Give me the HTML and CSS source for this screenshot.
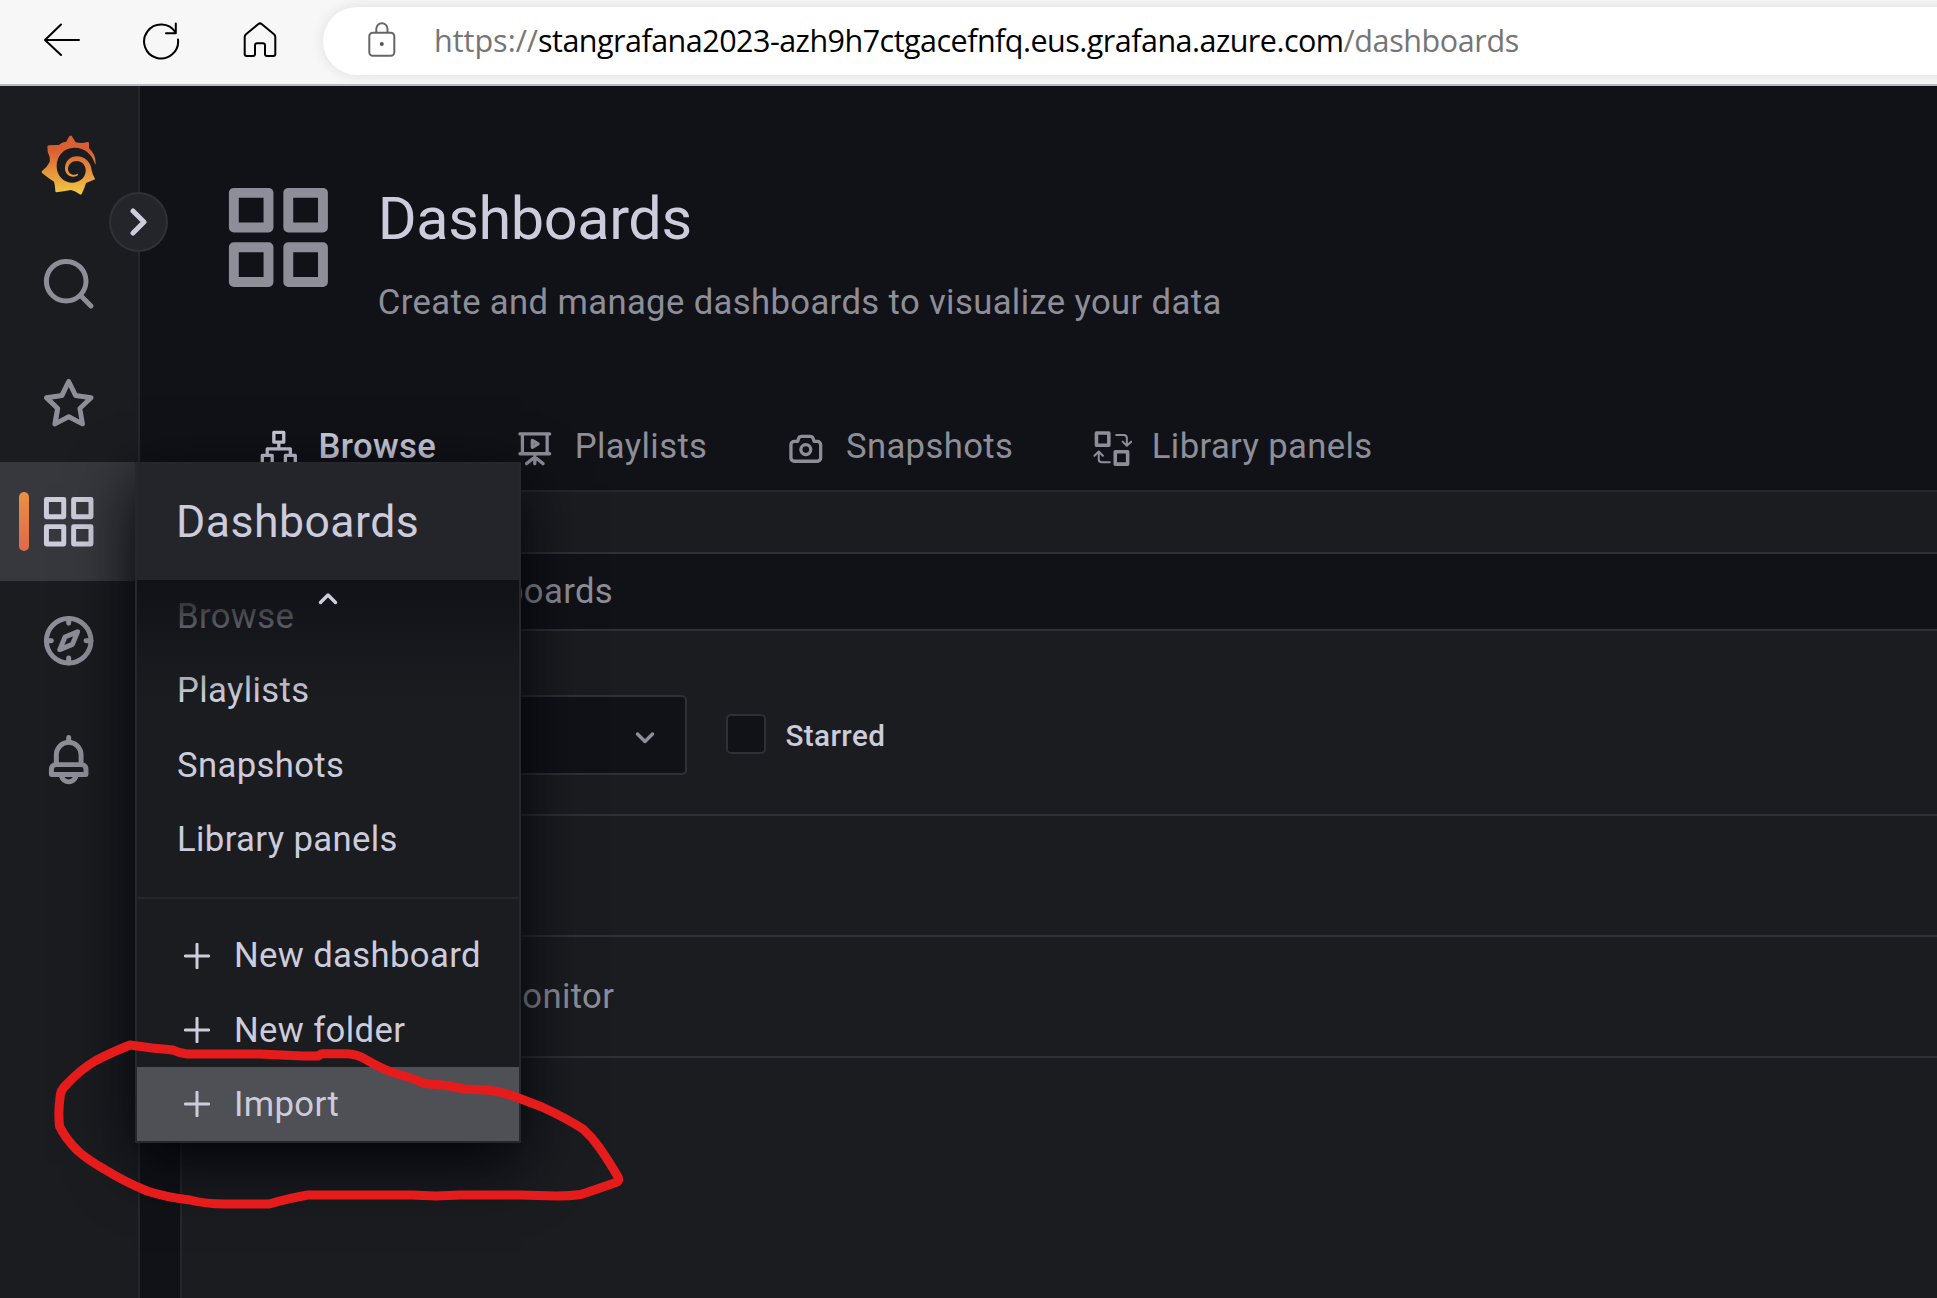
FILE: index.html
```html
<!DOCTYPE html>
<html lang="en">
<head>
<meta charset="utf-8">
<title>Dashboards - Grafana</title>
<link rel="stylesheet" href="styles.css">
</head>
<body>
<svg class="defs" width="0" height="0">
  <symbol id="apps" viewBox="0 0 24 24"><path d="M10,13H3a1,1,0,0,0-1,1v7a1,1,0,0,0,1,1h7a1,1,0,0,0,1-1V14A1,1,0,0,0,10,13ZM9,20H4V15H9ZM21,2H14a1,1,0,0,0-1,1v7a1,1,0,0,0,1,1h7a1,1,0,0,0,1-1V3A1,1,0,0,0,21,2ZM20,9H15V4h5Zm1,4H14a1,1,0,0,0-1,1v7a1,1,0,0,0,1,1h7a1,1,0,0,0,1-1V14A1,1,0,0,0,21,13Zm-1,7H15V15h5ZM10,2H3A1,1,0,0,0,2,3v7a1,1,0,0,0,1,1h7a1,1,0,0,0,1-1V3A1,1,0,0,0,10,2ZM9,9H4V4H9Z"/></symbol>
  <symbol id="plus" viewBox="0 0 26 26"><path d="M13 1.2V24.8M1.2 13H24.8" fill="none" stroke="currentColor" stroke-width="3" stroke-linecap="round"/></symbol>
</svg>

<header class="browser">
  <svg class="b-back" width="38" height="36" viewBox="0 0 38 36"><path d="M36 18H2M18 2.5L2 18L18 33" /></svg>
  <svg class="b-reload" width="38" height="38" viewBox="0 0 38 38"><path d="M36 17.5A17 17 0 1 1 33.6 10.6M33.8 1.5V11.2H24"/></svg>
  <svg class="b-home" width="34" height="36" viewBox="0 0 34 36"><path d="M15.4 2Q17 .7 18.6 2L31 12.2Q32.3 13.3 32.3 15V32Q32.3 34 30.3 34H24Q22 34 22 32V23.2Q22 21.2 20 21.2H14Q12 21.2 12 23.2V32Q12 34 10 34H3.7Q1.7 34 1.7 32V15Q1.7 13.3 3 12.2Z"/></svg>
  <div class="address">
    <svg class="lock" width="28" height="36" viewBox="0 0 28 36"><rect x="1.3" y="10.8" width="25" height="23" rx="3.5"/><path d="M8.3 10V6.8A5.6 5.6 0 0 1 19.5 6.8V10"/><circle class="dot" cx="13.8" cy="22" r="2"/></svg>
    <div class="url"><span class="scheme">https://</span><span class="host">stangrafana2023-azh9h7ctgacefnfq.eus.grafana.azure.com</span><span class="path">/dashboards</span></div>
  </div>
</header>

<div class="app">
  <nav class="rail">
    <a class="rail-logo">
      <svg width="58" height="64" viewBox="120 400 174 192">
        <defs><linearGradient id="sun" x1="0" y1="0" x2="0" y2="1"><stop offset=".25" stop-color="#da5f33"/><stop offset="1" stop-color="#f2ca44"/></linearGradient></defs>
        <path fill="url(#sun)" d="M211 408Q214 407 217 412L227 428Q246 433 262 427Q267 426 267 431L267 446Q287 463 287 492Q286 497 284 490C276 464 254 444 224 444C190 444 169 470 170 501C171 530 193 550 219 549C243 548 259 530 257 509C255 492 242 484 230 484C216 484 205 494 204 507C204 518 212 525 222 525C227 525 230 523 232 522Q236 523 233 527C229 531 223 532 217 531C203 529 194 518 195 504C196 484 211 470 231 470C254 470 273 487 275 512Q277 525 285 537Q286 540 280 541L258 550Q254 565 245 583Q242 586 238 583Q226 574 213 571Q190 575 170 578Q166 578 166 574Q166 560 162 546Q146 536 126 520Q124 517 126 514Q142 502 149 487Q150 480 149 472Q141 458 142 441Q143 438 147 437Q164 436 176 436Q188 426 199 426Q203 418 208 410Z"/>
      </svg>
    </a>
    <a class="rail-item"><svg viewBox="0 0 24 24"><path d="M21.71,20.29,18,16.61A9,9,0,1,0,16.61,18l3.68,3.68a1,1,0,0,0,1.42,0A1,1,0,0,0,21.71,20.29ZM11,18a7,7,0,1,1,7-7A7,7,0,0,1,11,18Z"/></svg></a>
    <a class="rail-item"><svg viewBox="0 0 24 24"><path d="M22,9.67A1,1,0,0,0,21.14,9l-5.69-.83L12.9,3a1,1,0,0,0-1.8,0L8.55,8.16,2.86,9a1,1,0,0,0-.81.68,1,1,0,0,0,.25,1l4.13,4-1,5.68A1,1,0,0,0,6.9,21.44L12,18.77l5.1,2.67a.93.93,0,0,0,.46.12,1,1,0,0,0,.59-.19,1,1,0,0,0,.4-1l-1-5.68,4.13-4A1,1,0,0,0,22,9.67Zm-6.15,4a1,1,0,0,0-.29.88l.72,4.2-3.76-2a1.06,1.06,0,0,0-.94,0l-3.76,2,.72-4.2a1,1,0,0,0-.29-.88l-3-3,4.21-.61a1,1,0,0,0,.76-.55L12,5.7l1.88,3.82a1,1,0,0,0,.76.55l4.21.61Z"/></svg></a>
    <a class="rail-item active"><svg><use href="#apps"/></svg></a>
    <a class="rail-item"><svg class="line" viewBox="0 0 24 24"><circle cx="12" cy="12" r="9"/><path d="M12 3V5M12 19V21M3 12H5M19 12H21M15.6 8.4L10.5 10.5L8.4 15.6L13.5 13.5Z"/></svg></a>
    <a class="rail-item"><svg viewBox="0 0 24 24"><path d="M18,13.18V10a6,6,0,0,0-5-5.91V3a1,1,0,0,0-2,0V4.09A6,6,0,0,0,6,10v3.18A3,3,0,0,0,4,16v2a1,1,0,0,0,1,1H8.14a4,4,0,0,0,7.72,0H19a1,1,0,0,0,1-1V16A3,3,0,0,0,18,13.18ZM8,10a4,4,0,0,1,8,0v3H8Zm4,10a2,2,0,0,1-1.72-1h3.44A2,2,0,0,1,12,20Zm6-3H6V16a1,1,0,0,1,1-1H17a1,1,0,0,1,1,1Z"/></svg></a>
  </nav>

  <main class="page">
    <div class="page-head">
      <svg class="page-icon"><use href="#apps"/></svg>
      <div>
        <h1>Dashboards</h1>
        <p class="sub">Create and manage dashboards to visualize your data</p>
      </div>
    </div>
    <div class="tabs">
      <a class="tab on"><svg class="line" viewBox="0 0 24 24"><path d="M9 2H15V8H9ZM12 8V12M5 16V12H19V16M2 16H8V22H2ZM16 16H22V22H16Z"/></svg><span>Browse</span></a>
      <a class="tab"><svg class="line" viewBox="0 0 24 24"><path d="M3 3H21M4.5 3V15M19.5 3V15M3 15H21M12 15V21M12 17L7 21M12 17L17 21M10.5 6.9V11.1L14 9Z"/></svg><span>Playlists</span></a>
      <a class="tab"><svg viewBox="0 0 24 24"><path d="M19,6.5H17.72l-.32-1a3,3,0,0,0-2.84-2H9.44A3,3,0,0,0,6.6,5.55l-.32,1H5a3,3,0,0,0-3,3v8a3,3,0,0,0,3,3H19a3,3,0,0,0,3-3v-8A3,3,0,0,0,19,6.5Zm1,11a1,1,0,0,1-1,1H5a1,1,0,0,1-1-1v-8a1,1,0,0,1,1-1H7a1,1,0,0,0,1-.68l.54-1.64a1,1,0,0,1,.95-.68h5.12a1,1,0,0,1,.95.68l.54,1.64A1,1,0,0,0,17,8.5h2a1,1,0,0,1,1,1Zm-8-9a4,4,0,1,0,4,4A4,4,0,0,0,12,8.5Zm0,6a2,2,0,1,1,2-2A2,2,0,0,1,12,14.5Z"/></svg><span>Snapshots</span></a>
      <a class="tab"><svg class="lib" viewBox="0 0 40 40"><rect x="4.5" y="4" width="12.5" height="12.5"/><rect x="23.5" y="23" width="12.5" height="12.5"/><path d="M24.5 6H32Q35.2 6 35.2 9V16.5M31 12.8L35.2 17L39.5 12.8M18 33.5H10Q6.8 33.5 6.8 30.5V23M2.500 27L6.8 22.8L11 27"/></svg><span>Library panels</span></a>
    </div>
    <section class="panel">
      <div class="search">Search for dashboards</div>
      <div class="filters">
        <div class="select"><svg width="20" height="14" viewBox="0 0 20 14"><path d="M2.5 3L10 10.5L17.5 3"/></svg></div>
        <label class="check"><i></i>Starred</label>
      </div>
      <div class="row"></div>
      <div class="row">Azure Monitor</div>
    </section>
  </main>

  <div class="flyout">
    <div class="fly-head">Dashboards</div>
    <div class="fly-body">
      <a>Browse</a><a>Playlists</a><a>Snapshots</a><a>Library panels</a>
      <div class="fade"><svg width="22" height="16" viewBox="0 0 22 16"><path d="M3.5 11.5L11 4L18.5 11.5"/></svg></div>
    </div>
    <div class="fly-actions">
      <a><svg><use href="#plus"/></svg>New dashboard</a>
      <a><svg><use href="#plus"/></svg>New folder</a>
      <a class="hover"><svg><use href="#plus"/></svg>Import</a>
    </div>
  </div>

  <button class="expand"><svg width="18" height="28" viewBox="0 0 18 28"><path d="M3 3L14 14L3 25"/></svg></button>
</div>

<svg class="marker" viewBox="0 0 1937 1298"><path d="M130 1045L152 1048L173 1050Q180 1053.5 187 1054L260 1054L303 1056H318L322 1053.7H347Q357 1054 365 1059Q380 1068 394 1073Q410 1077 425 1083.5L447 1085.5L464 1089L486 1090Q500 1091 516 1097L542 1107Q566 1118 583 1129Q592 1137 599 1147Q612 1166 618 1177Q620 1181 616 1182.5L581 1194.5Q570 1196 557 1196L520 1195H460L436 1196L412 1195H308Q290 1198 269 1204H226Q205 1204 190 1200Q165 1197 147 1191Q125 1182 104 1169Q88 1160 78 1151Q65 1138 59.5 1126Q58 1112 60 1098Q60 1090 67 1084Q80 1070 95 1061Q110 1053 130 1045Z"/></svg>
</body>
</html>
```
FILE: styles.css
```css
* { box-sizing: border-box; }
body {
  margin: 0;
  width: 1937px;
  height: 1298px;
  overflow: hidden;
  display: flex;
  flex-direction: column;
  position: relative;
  font-family: Roboto, "Liberation Sans", sans-serif;
  font-size: 34.65px;
  letter-spacing: 0.37px;
  background: #111217;
  color: #ccccdc;
}
svg { display: block; fill: currentColor; flex: none; }
svg.line, .lib { fill: none; stroke: currentColor; stroke-width: 2; stroke-linecap: round; stroke-linejoin: round; }
.defs { position: absolute; }

/* browser toolbar */
.browser {
  height: 86px;
  flex: none;
  display: flex;
  align-items: flex-start;
  background: #f7f7f7;
  border-bottom: 2px solid #b9bbbe;
  color: #000;
  overflow: hidden;
}
.browser svg { fill: none; stroke: currentColor; stroke-width: 2; stroke-linecap: round; stroke-linejoin: round; }
.b-back { margin: 22px 0 0 43px; }
.b-reload { margin: 22px 0 0 61px; }
.b-home { margin: 22px 0 0 63px; }
.address {
  flex: 1;
  height: 68px;
  margin: 7px -60px 0 46px;
  padding-left: 45px;
  display: flex;
  background: #fff;
  border-radius: 34px;
  box-shadow: 0 0 14px rgba(0, 0, 0, .1);
}
.browser .lock { margin-top: 15px; color: #666; }
.lock .dot { fill: #555; stroke: none; }
.url {
  margin-left: 38px;
  font: 30.5px/66px "Open Sans", "Noto Sans", sans-serif;
  white-space: nowrap;
  letter-spacing: 0;
  color: #000;
}
.scheme, .path { color: #757575; }
.host { letter-spacing: -0.52px; }
.path { letter-spacing: -0.4px; }

.app { flex: 1; display: flex; position: relative; min-height: 0; }

/* side rail */
.rail {
  width: 140px;
  flex: none;
  background: #1b1c20;
  border-right: 2px solid #26272c;
  color: #8e8e99;
}
.rail-logo { display: block; padding: 47px 0 0 40px; height: 138px; }
.rail-item { height: 119px; display: flex; align-items: center; padding-left: 38.8px; position: relative; }
.rail-item svg { width: 59.4px; height: 59.4px; }
.rail-item.active { background: #37383d; color: #ccccdc; margin-right: -2px; }
.rail-item.active::before {
  content: "";
  position: absolute;
  left: 19px;
  top: 30px;
  width: 10px;
  height: 59px;
  border-radius: 5px;
  background: linear-gradient(#eb9045, #e0684a);
}

/* page */
.page { flex: 1; min-width: 0; display: flex; flex-direction: column; }
.page-head { display: flex; padding: 92px 0 0 79px; height: 314px; }
.page-icon { width: 118.8px; height: 118.8px; color: #8e8e99; }
h1 { margin: 1px 0 0 40px; font-size: 59.4px; line-height: 80px; font-weight: 400; letter-spacing: -0.4px; }
.sub { margin: 23px 0 0 40px; line-height: 40px; color: #8e8e99; }
.tabs { display: flex; height: 92px; flex: none; border-bottom: 2px solid #26272c; padding-left: 119px; color: #8e8e99; }
.tab { display: flex; height: 70px; margin-right: 79px; line-height: 92px; }
.tab svg { width: 39.6px; height: 39.6px; margin: 28.5px 20px 0 0; }
.tab.on { color: #ccccdc; font-weight: 500; }
.tab .lib { stroke-width: 3.6; }
.lib path { stroke-width: 2; }
.panel { flex: 1; margin-left: 40px; background: #1b1c20; border-left: 2px solid #26272c; padding-top: 60px; color: #8e8e99; }
.search { height: 79px; background: #111217; border: solid #2e2f37; border-width: 2px 0; line-height: 75px; padding-left: 74px; }
.filters { display: flex; height: 183px; padding: 64px 0 0 40px; }
.select {
  width: 465px;
  height: 80px;
  display: flex;
  align-items: center;
  justify-content: flex-end;
  padding: 5px 30px 0 0;
  background: #111217;
  border: 2px solid #2e2f37;
  border-radius: 5px;
}
.select svg, .fade svg, .expand svg { fill: none; stroke: currentColor; stroke-width: 3.5; stroke-linecap: round; stroke-linejoin: round; }
.check { display: flex; margin-left: 39px; font-size: 29.7px; font-weight: 500; color: #ccccdc; line-height: 81px; }
.check i { width: 40px; height: 40px; margin: 19px 19.5px 0 0; background: #111217; border: 2px solid #2e2f37; border-radius: 5px; }
.row { height: 121px; border-top: 2px solid #2e2f37; line-height: 119px; padding-left: 210px; }
.row:last-child { height: 123px; border-bottom: 2px solid #2e2f37; }

/* dashboards flyout */
.flyout {
  position: absolute;
  left: 135px;
  top: 376px;
  width: 386px;
  height: 681px;
  background: #1b1c20;
  border: 2px solid #26272c;
  box-shadow: 0 20px 59px rgb(1, 4, 9);
}
.fly-head { height: 116px; background: #24252a; padding-left: 39px; font-size: 44.55px; line-height: 116px; letter-spacing: 0.48px; }
.fly-body { height: 317px; padding-top: 0; position: relative; overflow: hidden; display: flex; flex-direction: column; }
.fly-body a { height: 74.3px; line-height: 72.3px; padding-left: 40px; flex: none; }
.fade {
  position: absolute;
  inset: 0 0 auto;
  height: 119px;
  padding: 11px 0 0 180px;
  background: linear-gradient(#111217, rgba(17, 18, 23, 0));
}
.fly-actions { border-top: 2px solid #26272c; padding-top: 19.4px; }
.fly-actions a { height: 74.3px; line-height: 74.3px; padding-left: 46.5px; display: flex; align-items: center; white-space: nowrap; }
.fly-actions svg { width: 26px; height: 26px; margin-right: 24.5px; }
.fly-actions .hover { background: #4f5055; }

.expand {
  position: absolute;
  left: 109px;
  top: 106px;
  width: 59px;
  height: 60px;
  padding: 0 0 0 1px;
  display: flex;
  align-items: center;
  justify-content: center;
  border: 2px solid #303136;
  border-radius: 50%;
  background: #24252a;
  color: #ccccdc;
}
.expand svg { stroke-width: 5; }

.marker { position: absolute; left: 0; top: 0; width: 1937px; height: 1298px; pointer-events: none; fill: none; stroke: #e61c1c; stroke-width: 9; stroke-linejoin: round; }
```
